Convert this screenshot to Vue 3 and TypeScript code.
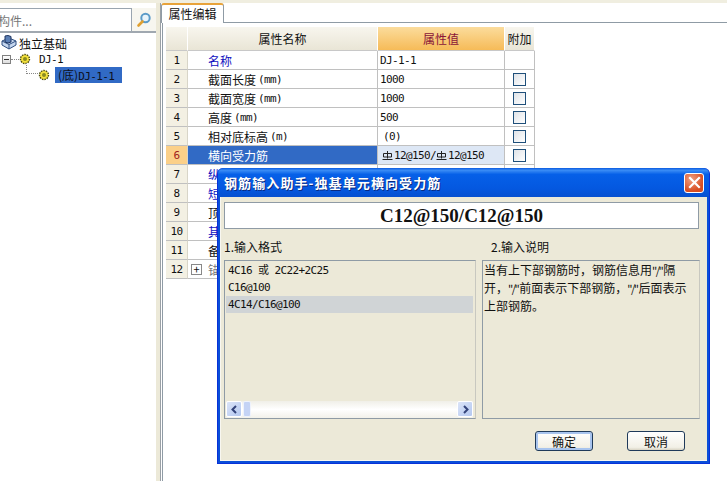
<script setup lang="ts">
interface Row {
  id: number
  name: string
  unit?: string
  value?: string
  steel?: boolean
  blue?: boolean
  check?: boolean
  selected?: boolean
  plus?: boolean
  indent?: boolean
}

const rows: Row[] = [
  { id: 1, name: '名称', value: 'DJ-1-1', blue: true },
  { id: 2, name: '截面长度', unit: '(mm)', value: '1000', check: true },
  { id: 3, name: '截面宽度', unit: '(mm)', value: '1000', check: true },
  { id: 4, name: '高度', unit: '(mm)', value: '500', check: true },
  { id: 5, name: '相对底标高', unit: '(m)', value: '(0)', check: true, indent: true },
  { id: 6, name: '横向受力筋', steel: true, check: true, selected: true },
  { id: 7, name: '纵向受力筋', blue: true },
  { id: 8, name: '短向加强筋', blue: true },
  { id: 9, name: '顶部柱间配筋' },
  { id: 10, name: '其它钢筋', blue: true },
  { id: 11, name: '备注' },
  { id: 12, name: '锚固搭接', plus: true },
]

const formats = ['4C16 或 2C22+2C25', 'C16@100', '4C14/C16@100']
</script>

<template>
  <div class="screen">
    <div class="topstrip"></div>
    <div class="main">
      <aside class="left">
        <div class="search">
          <div class="search-input">构件...</div>
          <div class="search-btn">
            <svg width="16" height="16" viewBox="0 0 16 16">
              <circle cx="9.5" cy="6" r="4.2" fill="#e8f4fb" stroke="#5b9bc8" stroke-width="2" />
              <path d="M6.5 9.5 L2.5 13.5" stroke="#e0a030" stroke-width="2.6" stroke-linecap="round" />
            </svg>
          </div>
        </div>
        <div class="tree">
          <div class="node root-node">
            <svg width="18" height="16" viewBox="0 0 18 16">
              <path d="M1 6 L8 3 L15 6 L15 10 L8 14 L1 10 Z" fill="#c5d6ee" stroke="#2f4f80" />
              <path d="M1 6 L8 9.500 L15 6 M8 9.500 V14" fill="none" stroke="#2f4f80" />
              <path d="M4 1 L7 0.500 L10 1.500 V7 L7 8 L4 7 Z" fill="#5b7fb5" stroke="#1f3560" />
            </svg>
            <span class="node-label">独立基础</span>
          </div>
          <div class="node level1">
            <span class="minus"></span>
            <span class="dots-h"></span>
            <svg class="gear" width="12" height="12" viewBox="0 0 12 12">
              <circle cx="6" cy="6" r="4.500" fill="#f5e23c" stroke="#4a4a10" stroke-width="1.400" stroke-dasharray="1.500 1" />
              <circle cx="6" cy="6" r="2" fill="#8a8a20" />
            </svg>
            <span class="mono node-text">DJ-1</span>
          </div>
          <div class="node level2">
            <span class="dots-l"></span>
            <svg class="gear" width="12" height="12" viewBox="0 0 12 12">
              <circle cx="6" cy="6" r="4.500" fill="#f5e23c" stroke="#4a4a10" stroke-width="1.400" stroke-dasharray="1.500 1" />
              <circle cx="6" cy="6" r="2" fill="#8a8a20" />
            </svg>
            <span class="tree-selected">(底)<span class="mono">DJ-1-1</span></span>
          </div>
        </div>
      </aside>
      <div class="splitter"></div>
      <section class="right">
        <div class="tabbar">
          <div class="tab">属性编辑</div>
        </div>
        <div class="tabbody">
          <div class="grid">
            <div class="head corner"></div>
            <div class="head">属性名称</div>
            <div class="head head-active">属性值</div>
            <div class="head">附加</div>
            <template v-for="row in rows" :key="row.id">
              <div class="cell idx mono" :class="{ 'idx-active': row.selected }">{{ row.id }}</div>
              <div class="cell name" :class="{ blue: row.blue, 'name-active': row.selected, grey: row.plus }">
                <span v-if="row.plus" class="plus">+</span>
                <span>{{ row.name }}</span>
                <span v-if="row.unit" class="mono unit">{{ row.unit }}</span>
              </div>
              <div class="cell val mono" :class="{ 'val-active': row.selected, 'val-indent': row.indent }">
                <template v-if="row.steel">
                  <svg class="steel" width="11" height="11" viewBox="0 0 11 11">
                    <path d="M1.500 3.500 H9.500 V7 H1.500 Z M5.500 1 V8.500 M0.500 9.500 H10.500" fill="none" stroke="#222" />
                  </svg><span>12@150/</span><svg class="steel" width="11" height="11" viewBox="0 0 11 11">
                    <path d="M1.500 3.500 H9.500 V7 H1.500 Z M5.500 1 V8.500 M0.500 9.500 H10.500" fill="none" stroke="#222" />
                  </svg><span>12@150</span>
                </template>
                <template v-else>{{ row.value }}</template>
              </div>
              <div class="cell add"><span v-if="row.check" class="check"></span></div>
            </template>
          </div>
        </div>
      </section>
    </div>

    <div class="dialog">
      <div class="titlebar">
        <span class="title">钢筋输入助手-独基单元横向受力筋</span>
        <span class="close">
          <svg width="13" height="13" viewBox="0 0 13 13">
            <path d="M2 2 L11 11 M11 2 L2 11" stroke="#fff" stroke-width="2.200" stroke-linecap="square" />
          </svg>
        </span>
      </div>
      <div class="dialog-body">
        <div class="bigvalue">C12@150/C12@150</div>
        <div class="columns">
          <div class="col col-left">
            <div class="col-label">1.输入格式</div>
            <div class="box list-box">
              <div class="list">
                <div v-for="(f, i) in formats" :key="f" class="list-item mono" :class="{ current: i === 2 }">{{ f }}</div>
              </div>
              <div class="hscroll">
                <span class="sbtn">
                  <svg width="9" height="9" viewBox="0 0 9 9"><path d="M6 1 L2.500 4.500 L6 8" fill="none" stroke="#33437a" stroke-width="2" /></svg>
                </span>
                <span class="thumb"></span>
                <span class="track"></span>
                <span class="sbtn">
                  <svg width="9" height="9" viewBox="0 0 9 9"><path d="M3 1 L6.500 4.500 L3 8" fill="none" stroke="#33437a" stroke-width="2" /></svg>
                </span>
              </div>
            </div>
          </div>
          <div class="col col-right">
            <div class="col-label label2">2.输入说明</div>
            <div class="box desc">当有上下部钢筋时，钢筋信息用<span class="q">"/"</span>隔<br />开，<span class="q">"/"</span>前面表示下部钢筋，<span class="q">"/"</span>后面表示<br />上部钢筋。</div>
          </div>
        </div>
        <div class="buttons">
          <button class="btn btn-default" type="button">确定</button>
          <button class="btn" type="button">取消</button>
        </div>
      </div>
    </div>
  </div>
</template>

<style scoped>
.screen {
  position: relative;
  width: 727px;
  height: 481px;
  overflow: hidden;
  display: flex;
  flex-direction: column;
  background: #fff;
  color: #111;
  font-family: "Noto Sans CJK SC", "Liberation Sans", sans-serif;
  font-size: 12px;
}

.mono {
  font-family: "DejaVu Sans Mono", "Noto Sans CJK SC", monospace;
  font-size: 11px;
  letter-spacing: -0.62px;
}

.topstrip {
  height: 3px;
  background: #f0eee0;
  flex: none;
}

.main {
  flex: 1;
  display: flex;
  min-height: 0;
}

.left {
  width: 156px;
  flex: none;
  display: flex;
  flex-direction: column;
}

.search {
  margin-top: 5px;
  height: 25px;
  display: flex;
  background: #f7f6ef;
  border-bottom: 2px solid #a0a8b0;
  flex: none;
  box-sizing: border-box;
}

.search-input {
  width: 132px;
  box-sizing: border-box;
  background: #fff;
  border: 1px solid #9aa5b0;
  border-left: none;
  border-bottom: none;
  color: #777;
  line-height: 23px;
  text-indent: -2px;
  white-space: nowrap;
  overflow: hidden;
}

.search-btn {
  flex: 1;
  display: flex;
  align-items: center;
  justify-content: center;
}

.tree {
  flex: 1;
  padding-top: 2px;
  position: relative;
}

.node {
  height: 16px;
  display: flex;
  align-items: center;
  white-space: nowrap;
}

.root-node svg {
  margin-left: 1px;
}

.level1 {
  padding-left: 2px;
}

.minus {
  width: 9px;
  height: 9px;
  box-sizing: border-box;
  border: 1px solid #808080;
  background: linear-gradient(#fff, #ddd);
  position: relative;
  flex: none;
}

.minus::after {
  content: "";
  position: absolute;
  left: 1px;
  right: 1px;
  top: 3px;
  height: 1px;
  background: #333;
}

.dots-h {
  width: 8px;
  border-top: 1px dotted #888;
}

.gear {
  flex: none;
}

.node-text {
  margin-left: 8px;
}

.level2 {
  padding-left: 26px;
  position: relative;
}

.dots-l {
  width: 12px;
  height: 11px;
  box-sizing: border-box;
  border-left: 1px dotted #888;
  border-bottom: 1px dotted #888;
  margin-top: -14px;
  flex: none;
}

.tree-selected {
  margin-left: 5px;
  width: 67px;
  height: 16px;
  line-height: 16px;
  box-sizing: border-box;
  padding-left: 3px;
  background: #316ac5;
  color: #0c1020;
}

.splitter {
  width: 5px;
  flex: none;
  background: #ece9d8;
  border-right: 1px solid #9aa0a6;
  box-sizing: border-box;
}

.right {
  flex: 1;
  min-width: 0;
  display: flex;
  flex-direction: column;
}

.tabbar {
  height: 20px;
  box-sizing: border-box;
  display: flex;
  border-bottom: 1px solid #8f9ba5;
  flex: none;
}

.tab {
  width: 63px;
  box-sizing: border-box;
  height: 20px;
  border: 1px solid #8f9ba5;
  border-top: 2px solid #e8a33a;
  border-bottom: none;
  border-radius: 3px 3px 0 0;
  background: #fff;
  text-align: center;
  line-height: 17px;
  font-size: 12px;
}

.tabbody {
  flex: 1;
  padding: 4px 0 0 3px;
  border-left: 1px solid #8f9ba5;
  margin-left: 1px;
}

.grid {
  display: grid;
  grid-template-columns: 22px 190px 127px 30px;
  grid-template-rows: 24px repeat(12, 19px);
  width: 369px;
}

.head {
  display: flex;
  align-items: center;
  justify-content: center;
  background: linear-gradient(#f8f6ee, #e9e5d6);
  border-right: 1px solid #fff;
  border-bottom: 1px solid #c8c8c8;
  box-sizing: border-box;
}

.head-active {
  background: linear-gradient(#fbdc9c, #f6bb58);
  color: #8a1538;
}

.cell {
  box-sizing: border-box;
  border-right: 1px solid #c0c0c0;
  border-bottom: 1px solid #c0c0c0;
  display: flex;
  align-items: center;
  white-space: pre;
  overflow: hidden;
}

.idx {
  justify-content: center;
  background: #f3f0e3;
  border-right-color: #d8d5c8;
}

.idx-active {
  background: #fbd089;
  color: #a02020;
}

.name {
  padding-left: 20px;
}

.blue {
  color: #1010c0;
}

.grey {
  color: #777;
  padding-left: 3px;
}

.name-active {
  background: #316ac5;
  color: #fff;
}

.plus {
  width: 11px;
  height: 11px;
  box-sizing: border-box;
  border: 1px solid #888;
  display: flex;
  align-items: center;
  justify-content: center;
  color: #111;
  font-size: 11px;
  line-height: 9px;
  margin-right: 6px;
}

.unit {
  margin-left: 2px;
}

.val {
  padding-left: 2px;
}

.val-indent {
  padding-left: 5px;
}

.val-active {
  background: #dde7f5;
  padding-left: 4px;
}

.steel {
  flex: none;
  margin: 0 1px 0 0;
}

.add {
  justify-content: center;
}

.check {
  width: 13px;
  height: 13px;
  box-sizing: border-box;
  border: 1px solid #1f4f7a;
  background: linear-gradient(135deg, #dfe3e8, #fff);
}

.dialog {
  position: absolute;
  left: 217px;
  top: 168px;
  width: 493px;
  height: 296px;
  box-sizing: border-box;
  display: flex;
  flex-direction: column;
  border: 1px solid #0831d9;
  border-top: none;
  border-radius: 6px 6px 0 0;
  background: #0a4fd8;
}

.titlebar {
  height: 29px;
  flex: none;
  display: flex;
  align-items: center;
  justify-content: space-between;
  padding: 0 5px 0 6px;
  border-radius: 6px 6px 0 0;
  background: linear-gradient(#0a5ae0 0%, #3a8cf5 8%, #0660e8 22%, #0458e0 70%, #0650d0 100%);
}

.title {
  color: #fff;
  font-weight: bold;
  font-size: 13px;
  letter-spacing: 1.1px;
  text-shadow: 1px 1px 0 #0a2a80;
}

.close {
  width: 20px;
  height: 20px;
  box-sizing: border-box;
  display: flex;
  align-items: center;
  justify-content: center;
  border: 1px solid #fff;
  border-radius: 3px;
  background: radial-gradient(circle at 35% 30%, #f0a080, #d84c20 70%);
}

.dialog-body {
  flex: 1;
  margin: 0 2px 2px;
  padding: 5px 6px 0 4px;
  background: #ece9d8;
  box-shadow: inset 1px 0 0 #f8f7f0, inset 0 -1px 0 #f8f7f0;
  display: flex;
  flex-direction: column;
  min-height: 0;
}

.bigvalue {
  height: 27px;
  width: 475px;
  flex: none;
  box-sizing: border-box;
  background: #fff;
  border: 1px solid #8f9ba5;
  text-align: center;
  line-height: 25px;
  font-family: "Liberation Serif", serif;
  font-weight: bold;
  font-size: 19px;
}

.columns {
  display: flex;
  gap: 6px;
  margin-top: 9px;
}

.col-label {
  height: 22px;
  line-height: 17px;
}

.label2 {
  padding-left: 9px;
}

.col-left {
  width: 252px;
}

.col-right {
  width: 218px;
}

.box {
  height: 159px;
  box-sizing: border-box;
  border: 1px solid #8f9ba5;
  border-right-color: #c8c8c0;
  border-bottom-color: #8f9ba5;
}

.list-box {
  display: flex;
  flex-direction: column;
  padding: 1px 2px 0 1px;
}

.list {
  flex: 1;
}

.list-item {
  height: 17px;
  line-height: 17px;
  padding-left: 2px;
  white-space: pre;
}

.current {
  background: #d0d4d6;
}

.hscroll {
  height: 17px;
  display: flex;
  background: linear-gradient(#f0efe8, #fff 50%, #f2f1ea);
  flex: none;
}

.sbtn {
  width: 16px;
  height: 16px;
  display: flex;
  align-items: center;
  justify-content: center;
  background: linear-gradient(135deg, #dbe4f8, #b4c8f0);
  border: 1px solid #fff;
  box-sizing: border-box;
  border-radius: 2px;
  flex: none;
}

.thumb {
  width: 8px;
  height: 16px;
  background: #c4d3f5;
  border: 1px solid #eef2fc;
  box-sizing: border-box;
  border-radius: 2px;
  margin-left: 1px;
}

.track {
  flex: 1;
}

.desc {
  padding: 0 0 0 1px;
  line-height: 17px;
  white-space: nowrap;
}

.q {
  font-size: 11px;
  letter-spacing: -1.5px;
  margin-right: 1px;
}

.buttons {
  display: flex;
  justify-content: flex-end;
  gap: 34px;
  margin-top: 12px;
  padding-right: 16px;
}

.btn {
  width: 58px;
  height: 20px;
  padding: 0;
  box-sizing: border-box;
  border: 1px solid #1f3a5a;
  border-radius: 3px;
  background: linear-gradient(#fff, #f2f0e6 85%, #d8d4c4);
  font-family: "Noto Sans CJK SC", sans-serif;
  font-size: 12px;
  color: #111;
}

.btn-default {
  box-shadow: inset 0 0 0 2px #a8c4ee;
}
</style>
